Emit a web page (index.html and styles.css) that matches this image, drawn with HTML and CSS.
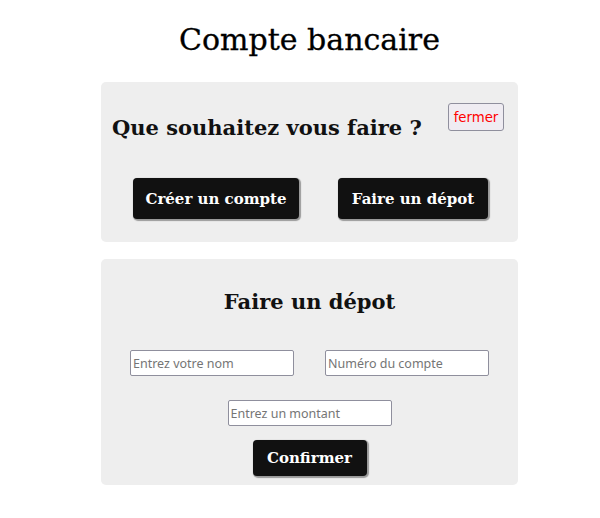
FILE: index.html
```html
<!DOCTYPE html>
<html lang="fr">
<head>
<meta charset="utf-8">
<title>Compte bancaire</title>
<link rel="stylesheet" href="styles.css">
</head>
<body>
<main class="page">
  <h1 class="title">Compte bancaire</h1>
  <section class="card card-menu">
    <div class="menu-head">
      <h2 class="menu-title">Que souhaitez vous faire ?</h2>
      <button class="close-btn" type="button">fermer</button>
    </div>
    <div class="menu-actions">
      <button class="dark-btn btn-create" type="button">Créer un compte</button>
      <button class="dark-btn btn-deposit" type="button">Faire un dépot</button>
    </div>
  </section>
  <section class="card card-form">
    <h2 class="form-title">Faire un dépot</h2>
    <div class="form-row">
      <input class="field" type="text" placeholder="Entrez votre nom">
      <input class="field" type="text" placeholder="Numéro du compte">
    </div>
    <div class="form-row form-row-single">
      <input class="field" type="text" placeholder="Entrez un montant">
    </div>
    <div class="form-row form-row-submit">
      <button class="dark-btn btn-confirm" type="button">Confirmer</button>
    </div>
  </section>
</main>
</body>
</html>
```

FILE: styles.css
```css
* { box-sizing: border-box; }
html, body { margin: 0; padding: 0; background: #ffffff; }
body { font-family: "DejaVu Serif", "Liberation Serif", serif; color: #111; }

.page {
  width: 417px;
  margin-left: 101px;
  padding-top: 20px;
  display: flex;
  flex-direction: column;
}

.title {
  margin: 0;
  height: 62px;
  text-align: center;
  font-weight: normal;
  font-size: 30px;
  line-height: 40px;
  color: #000;
  -webkit-text-stroke: 0.3px #000;
}

.card {
  background: #eeeeee;
  border-radius: 5px;
}

.card-menu {
  height: 160px;
  padding: 21px 14px 0 11px;
}

.menu-head {
  display: flex;
  justify-content: space-between;
  align-items: flex-start;
}

.menu-title {
  margin: 10px 0 0 0;
  font-size: 21px;
  line-height: 30px;
  font-weight: bold;
}

.close-btn {
  width: 56px;
  height: 28px;
  padding: 0;
  background: #efecf2;
  border: 1px solid #8f8f9d;
  border-radius: 3px;
  color: #ff0000;
  font-family: "DejaVu Sans", sans-serif;
  font-size: 13.3px;
}

.menu-actions {
  display: flex;
  gap: 39px;
  padding-left: 21px;
  margin-top: 35px;
}

.dark-btn {
  height: 41px;
  background: #111111;
  color: #ffffff;
  border: none;
  border-radius: 4px;
  box-shadow: 1px 1px 1px 1px #9a9a9a;
  font-family: "DejaVu Serif", "Liberation Serif", serif;
  font-weight: bold;
  font-size: 15px;
  padding: 0;
}

.btn-create { width: 166px; }
.btn-deposit { width: 150px; }

.card-form {
  margin-top: 17px;
  height: 226px;
  display: flex;
  flex-direction: column;
  align-items: center;
}

.form-title {
  margin: 26px 0 0 0;
  font-size: 21px;
  line-height: 34px;
  font-weight: bold;
}

.form-row {
  display: flex;
  justify-content: center;
  gap: 31px;
  margin-top: 31px;
}

.form-row-single { margin-top: 24px; }
.form-row-submit { margin-top: 14px; }

.field {
  width: 164px;
  height: 26px;
  margin: 0;
  padding: 0 2px;
  background: #fff;
  border: 1px solid #8f8f9d;
  border-radius: 2px;
  font-family: "Noto Sans", "Open Sans", sans-serif;
  font-size: 12.5px;
  color: #333;
}

.field::placeholder { color: #757575; }

.btn-confirm {
  width: 114px;
  height: 36px;
  font-size: 15px;
}
```
